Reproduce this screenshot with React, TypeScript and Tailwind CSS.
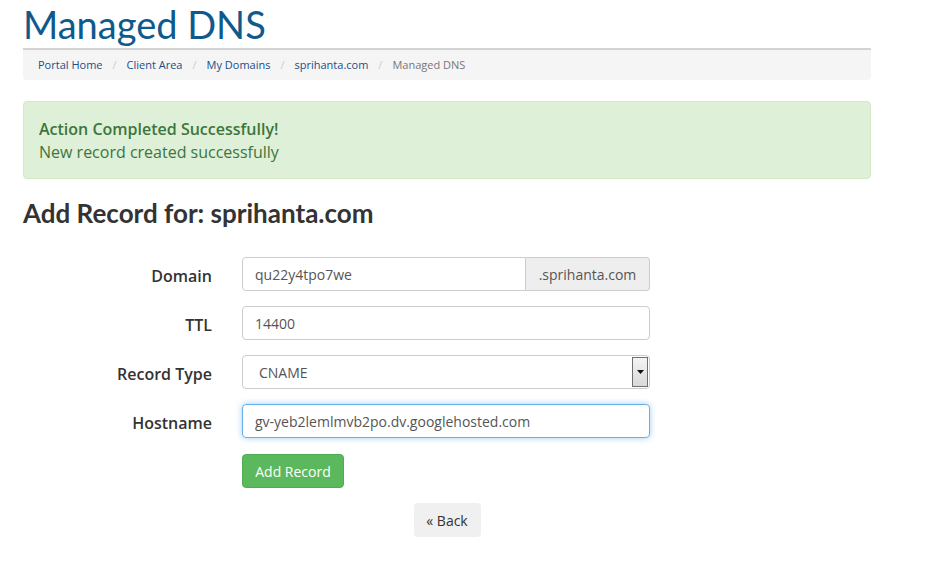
import React from 'react';

const CRUMBS = ['Portal Home', 'Client Area', 'My Domains', 'sprihanta.com'];

function Row({ label, children }: { label: string; children: React.ReactNode }) {
  return (
    <div className="mb-[15px] flex items-start">
      <label className="w-[219px] pr-[30px] pt-[8px] text-right text-[16px] font-semibold leading-[22px] text-[#333]">{label}</label>
      <div className="w-[408px]">{children}</div>
    </div>
  );
}

export default function App() {
  return (
    <div className="min-h-[561px] bg-white text-[14px] text-[#333]" style={{ fontFamily: '"Open Sans", sans-serif' }}>
      <div className="ml-[23px] w-[848px]">
        <h1 className="pt-[2px] text-[38px] leading-[44px] text-[#0f5a8c]" style={{ fontFamily: 'Lato, sans-serif' }}>
          Managed DNS
        </h1>

        <ol className="mt-[2px] flex h-[32px] items-center rounded-b border-t-2 border-[#d3d3d3] bg-[#f5f5f5] px-[15px] text-[11px]">
          {CRUMBS.map((c) => (
            <li key={c} className="flex items-center">
              <a className="text-[#174f8a]">{c}</a>
              <span className="px-[10px] text-[#ccc]">/</span>
            </li>
          ))}
          <li className="text-[#777]">Managed DNS</li>
        </ol>

        <div className="mt-[21px] h-[78px] rounded border border-[#d6e9c6] bg-[#dff0d8] px-[15px] pt-[16px] text-[16px] leading-[23px] text-[#3c763d]">
          <strong className="font-semibold">Action Completed Successfully!</strong>
          <div>New record created successfully</div>
        </div>

        <h2 className="mt-[19px] text-[26px] font-bold leading-[30px] text-[#333]" style={{ fontFamily: 'Lato, sans-serif' }}>
          Add Record for: sprihanta.com
        </h2>

        <form className="mt-[29px]">
          <Row label="Domain">
            <div className="flex h-[34px]">
              <input
                defaultValue="qu22y4tpo7we"
                className="h-[34px] flex-1 rounded-l border border-[#ccc] px-[12px] text-[14px] text-[#555] outline-none"
              />
              <span className="flex w-[124px] items-center justify-center rounded-r border border-l-0 border-[#ccc] bg-[#eee] text-[14px] text-[#555]">
                .sprihanta.com
              </span>
            </div>
          </Row>
          <Row label="TTL">
            <input
              defaultValue="14400"
              className="h-[34px] w-full rounded border border-[#ccc] px-[12px] text-[14px] text-[#555] outline-none"
            />
          </Row>
          <Row label="Record Type">
            <div className="flex h-[34px] items-stretch rounded border border-[#ccc] bg-white">
              <span className="flex flex-1 items-center pl-[16px] text-[14px] text-[#555]">CNAME</span>
              <span className="m-[1px] flex w-[16px] items-center justify-center border border-[#707070] bg-gradient-to-b from-[#f4f4f4] to-[#d9d9d9]">
                <svg width="7" height="4" viewBox="0 0 7 4">
                  <path d="M0 0h7L3.5 4z" fill="#111" />
                </svg>
              </span>
            </div>
          </Row>
          <Row label="Hostname">
            <input
              defaultValue="gv-yeb2lemlmvb2po.dv.googlehosted.com"
              className="h-[34px] w-full rounded border border-[#66afe9] px-[12px] text-[14px] text-[#555] shadow-[0_0_6px_rgba(102,175,233,0.6)] outline-none"
            />
          </Row>
          <div className="ml-[219px] pt-[1px]">
            <button type="button" className="h-[34px] w-[102px] rounded border border-[#4cae4c] bg-[#5cb85c] text-[14px] text-white">
              Add Record
            </button>
          </div>
        </form>

        <div className="mt-[15px] flex justify-center">
          <button type="button" className="h-[34px] w-[67px] rounded bg-[#f0f0f0] text-[14px] text-[#333]">
            « Back
          </button>
        </div>
      </div>
    </div>
  );
}
